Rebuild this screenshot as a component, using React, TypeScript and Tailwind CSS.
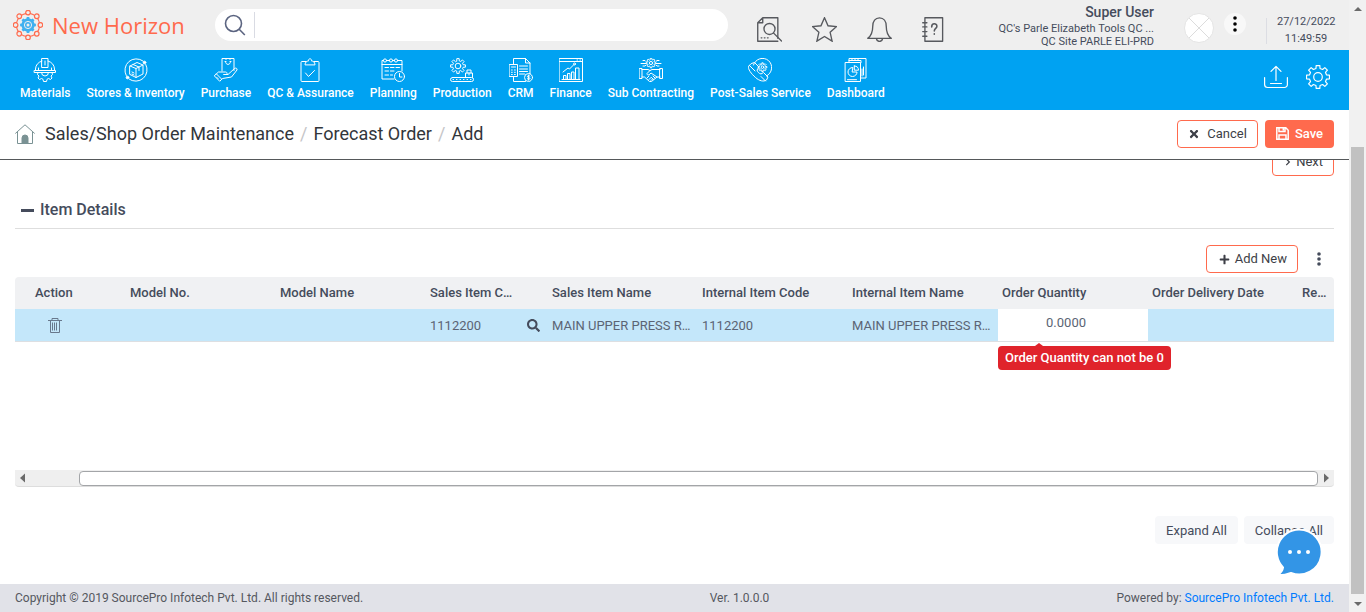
import type { ReactNode } from 'react';
import { FaSearch, FaTimes, FaPlus, FaChevronRight } from 'react-icons/fa';

function Line({ children, size = 'size-6', weight = 1 }: { children: ReactNode; size?: string; weight?: number }) {
  return (
    <svg viewBox="0 0 24 24" className={size} fill="none" stroke="currentColor" strokeWidth={weight} strokeLinejoin="round" strokeLinecap="round" aria-hidden="true">
      {children}
    </svg>
  );
}

const gear = (cx: number, cy: number, outer: number, inner: number, teeth = 8) => {
  const pts: string[] = [];
  const step = (Math.PI * 2) / teeth;
  for (let i = 0; i < teeth; i++) {
    const a = i * step - Math.PI / 2;
    [
      [-0.3, inner],
      [-0.2, outer],
      [0.2, outer],
      [0.3, inner],
    ].forEach(([f, r]) => {
      pts.push(`${(cx + Math.cos(a + f * step) * r).toFixed(2)} ${(cy + Math.sin(a + f * step) * r).toFixed(2)}`);
    });
  }
  return `M${pts.join('L')}Z`;
};

const modules: { label: string; icon: ReactNode }[] = [
  {
    label: 'Materials',
    icon: (
      <>
        <path d="M1.5 12.5h21v2h-21zM2.5 12.5v-1.5a9.5 9 0 0 1 6.5-8M21.500 12.5v-1.500a9.500 9 0 0 0-6.500-8M9 .500h6v9H9zM12 3v4M5.500 12v-2M18.500 12v-2" />
        <path d="M5 14.500l-.5 2 1.500 1.500-1 2 1.500 1.500 2-1 1.500.8.500 2.200h3l.500-2.200 1.500-.8 2 1 1.500-1.500-1-2 1.500-1.500-.500-2M8.500 14.500a3.500 3.500 0 0 0 7 0" />
      </>
    ),
  },
  {
    label: 'Stores & Inventory',
    icon: (
      <>
        <path d="M21.800 6.500A11.400 11.400 0 0 1 5 21M2.200 17.500A11.400 11.400 0 0 1 19 3" />
        <path d="M6 8l7-3.500 6 2.500v9l-7 3.500-6-3zM6 8l6 2.500v9M12 10.500l7-3.500M9 6.500l6 2.500v3.500M8 14l2 1M8 16l2 1" />
        <circle cx="20.500" cy="4.500" r="1.300" fill="currentColor" />
        <circle cx="3.500" cy="19.500" r="1.300" fill="currentColor" />
      </>
    ),
  },
  {
    label: 'Purchase',
    icon: (
      <>
        <path d="M8 13V.5h12v12M12 .5v1M16 .5v1M11.500 3.500c0 4 5 4 5 0M11 3.500h1M16 3.500h1" />
        <path d="M.500 17.500l4-3.500 7 0c2 0 2 2.500.500 2.500H9.500h4.500l6.500-6c1.500-1 3 0 2.500 1.500l-5.500 7-9 1.500-2.500 2.500zM2.500 16l5 5M3 19.500l1 1" />
      </>
    ),
  },
  {
    label: 'QC & Assurance',
    icon: (
      <>
        <path d="M8 3.500H4a1 1 0 0 0-1 1v18a1 1 0 0 0 1 1h16a1 1 0 0 0 1-1v-18a1 1 0 0 0-1-1h-4" />
        <path d="M7 6.500c0-2.500 2-3.500 3.500-3.500a1.600 1.600 0 1 1 3 0c1.500 0 3.500 1 3.500 3.500zM7.500 15l3 3.500 6-6" />
      </>
    ),
  },
  {
    label: 'Planning',
    icon: (
      <>
        <path d="M13 21H1V2.500h1.500M5.500 2.500h3M11.500 2.500h2M16.500 2.500H21V13M1 6.500h20M4 9.500h3.500M9.500 9.500h3.500M15 9.500h3.500M4 13h3.500M9.500 13h3.500M4 17h3.500M9.500 17h2" />
        <circle cx="4" cy="2.500" r="1.600" />
        <circle cx="10" cy="2.500" r="1.600" />
        <circle cx="15" cy="2.500" r="1.600" />
        <circle cx="18.500" cy="18.500" r="5" />
        <path d="M18.500 15.500v3.500h2.500" />
      </>
    ),
  },
  {
    label: 'Production',
    icon: (
      <>
        <path d={gear(8, 8, 7.5, 5.3)} />
        <circle cx="8" cy="8" r="2.800" />
        <rect x=".500" y="19.500" width="23" height="4" rx="2" />
        <path d="M15.500 19.500v-4.500h7v4.500M17 15v-3h4v3M3 21.500h.5M6.500 21.500h.5M10 21.500h.5M13.500 21.500h.5M17 21.500h.5M20.500 21.500h.5M19 15v2" />
      </>
    ),
  },
  {
    label: 'CRM',
    icon: (
      <>
        <path d="M4.500 6V.5h12l4.500 4.500v11M16.500.5V5H21M4.500 18.500v5h12" />
        <rect x=".500" y="6.500" width="8" height="12" />
        <path d="M2.500 9h4M2.500 12h.8M5.500 12h.8M2.500 14.300h.8M5.500 14.300h.8M2.500 16.500h.8M5.500 16.500h.8M10.500 8h8M10.500 11h8M10.500 13.500h8M10.500 16h5" />
        <circle cx="19.500" cy="19.500" r="4" />
        <path d="M21 18.200c-1-1-3-.6-2.500.7.500.8 2.500.5 2.500 1.700-.3 1-2 .9-2.800 0M19.600 17v5.200" />
      </>
    ),
  },
  {
    label: 'Finance',
    icon: (
      <>
        <path d="M.500.500h23v23H.500zM.500 3.500h23M18 2h.5M21 2h.5M3 21.500h18M4.500 21.500v-4h2.500v4M8.500 21.500v-6H11v6M12.500 21.500V14H15v7.500M16.500 21.500V10H20v11.500M4 14l5-4 1.500 1L15 6.500" />
        <circle cx="15.500" cy="6" r="1" />
      </>
    ),
  },
  {
    label: 'Sub Contracting',
    icon: (
      <>
        <path d={gear(12, 5, 4.8, 3.6)} />
        <circle cx="12" cy="5" r="1.600" />
        <path d="M4 2.500h2l1 1M2 5.500h5M4 8h2l1-1M20 2.500h-2l-1 1M22 5.500h-5M20 8h-2l-1-1M.500 10.500h2.500v10H.500zM21 10.500h2.500v10H21zM3 11.500h6l2 1 2-1h8M3 19h2.500l5 4.500 2 0 5.500-4.500h3M11 12.500l-3 3c0 2 2 2 4-.500l6 4M8 20l2-2M10 21.500l2-2M12 22.500l1.500-1.500M14.500 21.500l-2-2M16 20l-2-2" />
      </>
    ),
  },
  {
    label: 'Post-Sales Service',
    icon: (
      <>
        <path d="M5.500 7a9.300 9.300 0 1 1 13 11M3.500 5.500l3-1 4.500 4.500-2 3c.5 2 2 3.500 4 4l2.500-1.500 4.500 4.500-1.500 3c-3 2-7 1-11-2.500S-.5 11 .5 8.500zM1.500 7.500l5.500 5.500M13 18.500l4.500 4.500" />
        <path d={gear(14.5, 9.2, 4.4, 3, 8)} />
        <circle cx="14.500" cy="9.200" r="1.300" />
      </>
    ),
  },
  {
    label: 'Dashboard',
    icon: (
      <>
        <path d="M1.500 4.500h15v19h-15zM5 4V.500h17v19.500h-5.500M5 2.500h12v2M8 .5v2M11 .5v2M14 .5v2M19.500 9v8M18 11v7M3.500 21.700h9" />
        <path d="M8.500 9.500a4.500 4.500 0 1 0 4.500 4.500H8.500zM10.300 8v4.200h4.200c0-2.700-1.500-4.200-4.200-4.200z" />
      </>
    ),
  },
];

function Logo() {
  const spots = [0, 45, 90, 135, 180, 225, 270, 315].map((d) => {
    const a = (d * Math.PI) / 180;
    return [15 + Math.cos(a) * 12.4, 15 + Math.sin(a) * 12.4];
  });
  return (
    <svg viewBox="0 0 30 30" className="size-[30px]" fill="none" aria-hidden="true">
      <circle cx="15" cy="15" r="11.600" stroke="#ff6a4d" strokeWidth="1.100" />
      {spots.map(([x, y], i) => (
        <circle key={i} cx={x} cy={y} r="2.300" fill="#efefef" stroke="#ff6a4d" strokeWidth="1.200" />
      ))}
      <path d={gear(15, 15, 8, 6.6)} fill="#3fb0f0" />
      <circle cx="15" cy="15" r="3.600" stroke="#efefef" strokeWidth="1" />
      <circle cx="15" cy="15" r="1.500" fill="#efefef" />
    </svg>
  );
}

const headIcons: { label: string; icon: ReactNode }[] = [
  {
    label: 'Search document',
    icon: (
      <>
        <path d="M20 20.500V.700H5.500L.700 5.500v17.800H20M.700 5.500h4.800V.700" />
        <circle cx="12" cy="11.500" r="5.300" />
        <path d="M16 15.500l7.500 7.500M4 20h.7M7 20h.7M10 20h.7" />
      </>
    ),
  },
  {
    label: 'Favourites',
    icon: <path d="M12 .7l3.400 7.700 8.200.8-6.200 5.500 1.900 8.500L12 18.700l-7.300 4.500 1.900-8.500L.4 9.200l8.200-.8z" strokeLinejoin="miter" />,
  },
  {
    label: 'Notifications',
    icon: (
      <>
        <path d="M.700 20.500c4-3 4.800-6 4.800-11.500C5.500 4 8 .8 12 .8S18.500 4 18.500 9c0 5.500.800 8.500 4.800 11.500z" />
        <path d="M9 20.800c.5 3.500 5.500 3.500 6 0" />
      </>
    ),
  },
  {
    label: 'Help',
    icon: (
      <>
        <path d="M2.800.700h17v22.600h-17zM.7 5.500h4M.7 9.500h4M.7 14h4M.7 18.500h4" />
        <path d="M9.300 9.500c0-4 5-3.700 5-.700 0 2.200-2.500 2-2.500 4.700M11.800 16v.500" strokeWidth="1.500" />
      </>
    ),
  },
];

const outline = 'flex h-7 items-center rounded border border-[#ff6a4d] bg-white text-[13px] text-[#3d3f47]';

function TopBar() {
  return (
    <header className="flex h-[50px] items-center bg-[#efefef] pr-[14px] pl-[13px] text-[#454c5c]">
      <a href="#home" className="flex w-[202px] shrink-0 items-center gap-[9px] font-['Open_Sans',sans-serif] text-[22px] text-[#ff6a4d]">
        <Logo />
        New Horizon
      </a>
      <form className="flex h-8 min-w-0 flex-1 items-center rounded-full bg-white pr-4 pl-[9px]" role="search">
        <label htmlFor="global-search" className="flex h-[26px] w-[31px] items-center border-r border-[#d9dbe3] text-[#5b6480]">
          <svg viewBox="0 0 22 22" className="size-[22px]" fill="none" stroke="currentColor" strokeWidth="1.600" aria-hidden="true">
            <circle cx="9.500" cy="9.500" r="8" />
            <path d="M15.200 15.200L20.800 21" />
          </svg>
        </label>
        <input id="global-search" aria-label="Search" className="h-full min-w-0 flex-1 bg-transparent px-2 text-sm outline-none" />
      </form>
      <div className="ml-[29px] flex shrink-0 gap-[30px] pt-[9px] text-[#57595e]">
        {headIcons.map((item) => (
          <button key={item.label} type="button" aria-label={item.label}>
            <Line size="size-[25px]" weight={1.3}>{item.icon}</Line>
          </button>
        ))}
      </div>
      <div className="ml-[51px] w-[156px] shrink-0 text-right text-[11px] leading-[13px]">
        <div className="pt-px text-sm leading-4 font-medium">Super User</div>
        <div className="mt-[2px]">QC's Parle Elizabeth Tools QC ...</div>
        <div>QC Site PARLE ELI-PRD</div>
      </div>
      <svg viewBox="0 0 30 30" className="mt-[5px] ml-[30px] size-[30px] shrink-0" aria-label="Profile picture">
        <circle cx="15" cy="15" r="14.500" fill="#fff" stroke="#e4e4e4" />
        <path d="M5 5l20 20M25 5L5 25" stroke="#dcdcdc" />
      </svg>
      <button type="button" aria-label="User menu" className="mb-[2px] ml-[10px] flex size-[22px] shrink-0 items-center justify-center rounded-full bg-[#f8f8f8]">
        <svg viewBox="0 0 4 18" className="h-[18px] w-1" aria-hidden="true">
          <circle cx="2" cy="3" r="1.800" />
          <circle cx="2" cy="9" r="1.800" />
          <circle cx="2" cy="15" r="1.800" />
        </svg>
      </button>
      <div className="mt-3 ml-5 h-[26px] w-px shrink-0 bg-[#dcdde3]" />
      <div className="mt-[10px] ml-[10px] w-[58px] shrink-0 text-center text-[11px] leading-[17px]">
        <div>27/12/2022</div>
        <div>11:49:59</div>
      </div>
    </header>
  );
}

function ModuleNav() {
  return (
    <nav className="flex h-[60px] items-start bg-[#00a2f2] pr-[19px] pl-5 text-xs font-medium text-white">
      <ul className="flex flex-1 gap-4 pt-2">
        {modules.map((m) => (
          <li key={m.label}>
            <a href="#module" className="flex flex-col items-center gap-[3px] whitespace-nowrap">
              <Line>{m.icon}</Line>
              <span className="leading-4">{m.label}</span>
            </a>
          </li>
        ))}
      </ul>
      <div className="flex gap-[18px] pt-[15px]">
        <button type="button" aria-label="Upload">
          <Line weight={1.2}>
            <path d="M.6 12.500v7a3 3 0 0 0 3 3h16.800a3 3 0 0 0 3-3v-7M12 15.500V1.500M7 6.300l5-5 5 5M6.500 18.500h11" />
          </Line>
        </button>
        <button type="button" aria-label="Settings">
          <Line weight={1.2}>
            <path d={gear(12, 12, 11.6, 8.8)} />
            <circle cx="12" cy="12" r="4.300" />
          </Line>
        </button>
      </div>
    </nav>
  );
}

function Breadcrumb() {
  return (
    <div className="flex h-[50px] items-center border-b border-[#55585a] bg-white px-[15px] pb-[2px]">
      <a href="#home" aria-label="Home" className="mr-[10px] text-[#7a9294]">
        <svg viewBox="0 0 20 20" className="size-5" fill="none" stroke="currentColor" aria-hidden="true">
          <path d="M.3 9.500L10 .8l9.700 8.700M2.500 8v11.500h15V8" />
          <path d="M7 19.500V14a3 3 0 0 1 6 0v5.500z" fill="currentColor" />
        </svg>
      </a>
      <ol className="flex flex-1 gap-[6px] text-lg text-[#32363b]">
        <li>Sales/Shop Order Maintenance</li>
        <li className="text-[#c5c5c8]">/</li>
        <li>Forecast Order</li>
        <li className="text-[#c5c5c8]">/</li>
        <li>Add</li>
      </ol>
      <div className="flex gap-[7px]">
        <button type="button" className={`${outline} gap-[7px] px-[10px]`}>
          <FaTimes className="size-[12px]" />
          Cancel
        </button>
        <button type="button" className="flex h-7 items-center gap-[6px] rounded bg-[#ff6a4d] px-[11px] text-[13px] font-medium text-white">
          <svg viewBox="0 0 13 13" className="size-[13px]" fill="none" stroke="currentColor" strokeWidth="1.500" aria-hidden="true">
            <path d="M.8.8h9l2.400 2.400v9H.8zM3 1v3.500h6V1M3 12V8h7v4M7.300 1.500v2" />
          </svg>
          Save
        </button>
      </div>
    </div>
  );
}

const columns: { label: string; width: string }[] = [
  { label: 'Action', width: 'w-[111px] pl-5' },
  { label: 'Model No.', width: 'w-[150px]' },
  { label: 'Model Name', width: 'w-[150px]' },
  { label: 'Sales Item Code', width: 'w-[122px] pr-8' },
  { label: 'Sales Item Name', width: 'w-[150px]' },
  { label: 'Internal Item Code', width: 'w-[150px]' },
  { label: 'Internal Item Name', width: 'w-[150px]' },
  { label: 'Order Quantity', width: 'w-[150px]' },
  { label: 'Order Delivery Date', width: 'w-[150px]' },
  { label: 'Remarks', width: '' },
];

function ItemTable() {
  return (
    <div className="relative">
      <table className="w-full table-fixed border-collapse text-left text-[13px] text-[#5b6474]">
        <thead>
          <tr className="h-8 text-[#454c5c]">
            {columns.map((c) => (
              <th key={c.label} scope="col" className={`truncate bg-[#f0f1f3] px-1 py-0 font-medium first:rounded-tl last:rounded-tr ${c.width}`}>
                {c.label}
              </th>
            ))}
          </tr>
        </thead>
        <tbody>
          <tr className="h-8 border-b border-[#dddfe2] bg-[#c4e7fa]">
            <td className="pt-[2px] pl-[33px]">
              <button type="button" aria-label="Delete row" className="block text-[#68788c]">
                <svg viewBox="0 0 14 15" className="h-[15px] w-[14px]" fill="none" stroke="currentColor" aria-hidden="true">
                  <path d="M0 2.500h14M4 2V.5h6V2M2.500 3v11.500h9V3M4.500 4.500v8M6.500 4.500v8M8.500 4.500v8" />
                </svg>
              </button>
            </td>
            <td />
            <td />
            <td className="px-1 pt-[2px]">
              <div className="flex items-center">
                <input aria-label="Sales Item Code" defaultValue="1112200" className="min-w-0 flex-1 bg-transparent outline-none" />
                <button type="button" aria-label="Find sales item" className="mr-1 text-[#454c5c]">
                  <FaSearch className="size-[13px]" />
                </button>
              </div>
            </td>
            <td className="truncate px-1 pt-[2px]">MAIN UPPER PRESS ROLLER</td>
            <td className="truncate px-1 pt-[2px]">1112200</td>
            <td className="truncate px-1 pt-[2px]">MAIN UPPER PRESS ROLLER</td>
            <td className="bg-white p-0 align-top">
              <input
                aria-label="Order Quantity"
                aria-describedby="quantity-error"
                defaultValue="0.0000"
                className="block h-[26px] w-full bg-transparent pr-[62px] text-right outline-none"
              />
            </td>
            <td />
            <td />
          </tr>
        </tbody>
      </table>
      <div id="quantity-error" role="alert" className="absolute top-[69px] left-[983px] flex h-6 items-center rounded bg-[#e0232b] px-[7px] text-[13px] font-medium whitespace-nowrap text-white">
        <span className="absolute -top-[3px] left-[37px] border-x-[4px] border-b-[3px] border-x-transparent border-b-[#e0232b]" />
        Order Quantity can not be 0
      </div>
    </div>
  );
}

function Arrow({ d }: { d: string }) {
  return (
    <svg viewBox="0 0 10 10" className="size-[10px] shrink-0" fill="#6a6a6a" aria-hidden="true">
      <path d={d} />
    </svg>
  );
}

export default function App() {
  return (
    <div className="flex min-h-screen bg-white font-[Roboto,sans-serif]">
      <div className="flex min-w-0 flex-1 flex-col">
        <TopBar />
        <ModuleNav />
        <Breadcrumb />
        <main className="relative flex-1 overflow-hidden px-[15px]">
          <div className="-mt-3 flex justify-end">
            <button type="button" className={`${outline} gap-[4px] pr-[10px] pl-[11px]`}>
              <FaChevronRight className="size-[8px]" />
              Next
            </button>
          </div>
          <h2 className="mt-5 flex h-[33px] items-center gap-[6px] border-b border-[#dedede] pb-1 pl-[6px] text-base font-medium text-[#454c5c]">
            <span className="h-[3px] w-[13px] bg-current" />
            Item Details
          </h2>
          <div className="mt-4 mb-1 flex items-center justify-end">
            <button type="button" className={`${outline} gap-[5px] pr-[10px] pl-[12px]`}>
              <FaPlus className="size-[11px]" />
              Add New
            </button>
            <button type="button" aria-label="Table options" className="mr-[13px] ml-[19px] text-[#454c5c]">
              <svg viewBox="0 0 4 14" className="h-[14px] w-1" fill="currentColor" aria-hidden="true">
                <circle cx="2" cy="2" r="1.800" />
                <circle cx="2" cy="7" r="1.800" />
                <circle cx="2" cy="12" r="1.800" />
              </svg>
            </button>
          </div>
          <div className="flex h-[210px] flex-col justify-between">
            <ItemTable />
            <div className="flex h-[17px] items-center justify-between rounded-b border-b border-[#dddddd] bg-[#efefef] px-[3px]">
              <Arrow d="M7 .5v9L2 5z" />
              <div className="mr-[3px] ml-[51px] h-[15px] flex-1 rounded border border-[#a3a5a8] bg-white" />
              <Arrow d="M3 .5v9L8 5z" />
            </div>
          </div>
          <div className="mt-[29px] mb-10 flex justify-end gap-[6px] text-[13px] text-[#454c5c]">
            <button type="button" className="h-7 rounded bg-[#f7f8fa] px-[11px] pt-px">Expand All</button>
            <button type="button" className="h-7 rounded bg-[#f7f8fa] px-[11px] pt-px">Collapse All</button>
          </div>
          <button type="button" aria-label="Open chat" className="absolute right-[25px] bottom-[7px]">
            <svg viewBox="0 0 50 50" className="size-[50px]" aria-hidden="true">
              <path
                d="M25 2.500a22.500 22.500 0 1 1-8 43.500C13 47.500 9 48.500 3 48.200c3-1.700 5.500-4 6-7.700A22.500 22.500 0 0 1 25 2.500z"
                fill="#3395e6"
                stroke="#fff"
                strokeWidth="2"
              />
              <circle cx="16" cy="25" r="2" fill="#fff" />
              <circle cx="25" cy="25" r="2" fill="#fff" />
              <circle cx="34" cy="25" r="2" fill="#fff" />
            </svg>
          </button>
        </main>
        <footer className="grid h-7 grid-cols-3 items-center bg-[#e1e2e8] px-[15px] text-xs text-[#55585f]">
          <span>Copyright © 2019 SourcePro Infotech Pvt. Ltd. All rights reserved.</span>
          <span className="pl-[255px]">Ver. 1.0.0.0</span>
          <span className="text-right">
            Powered by: <a href="#vendor" className="text-[#007bff]">SourcePro Infotech Pvt. Ltd.</a>
          </span>
        </footer>
      </div>
      <div className="flex w-[17px] shrink-0 flex-col items-center justify-between bg-[#f1f1f1] py-[3px]" aria-hidden="true">
        <Arrow d="M1 8h8L5 4z" />
        <div className="mt-[134px] w-[13px] flex-1 bg-[#c1c1c1]" />
        <div className="mt-[5px]">
          <Arrow d="M1 3h8L5 7z" />
        </div>
      </div>
    </div>
  );
}
